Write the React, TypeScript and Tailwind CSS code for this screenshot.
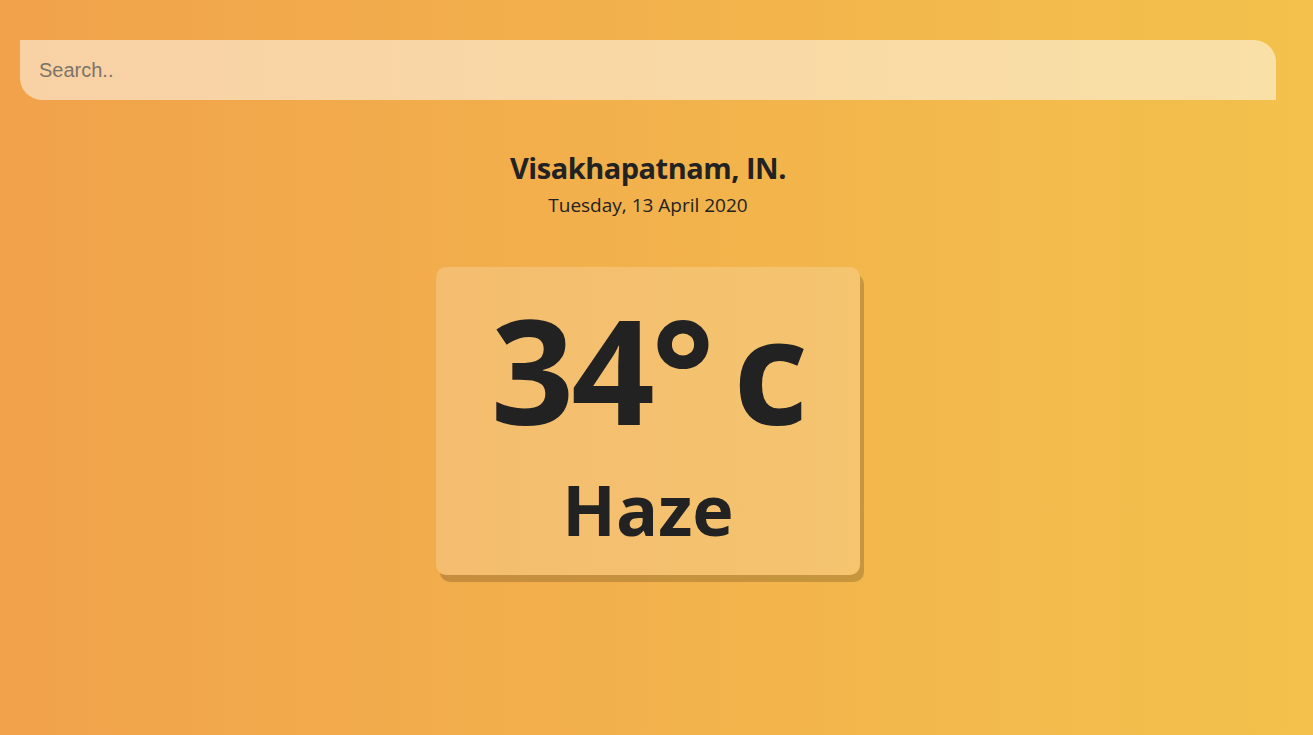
import React from "react";

export default function App() {
  return (
    <div className="min-h-screen w-full bg-linear-to-r from-[#f1a24b] to-[#f3c14c] font-['Open_Sans',sans-serif] text-[#222222]">
      <main className="pt-10 pl-5 pr-[37px]">
        <div className="search-box">
          <input
            type="text"
            placeholder="Search.."
            className="block h-[60px] w-full rounded-tr-[22px] rounded-bl-[22px] bg-white/50 px-[19px] font-['Liberation_Sans',sans-serif] text-[20px] text-[#313131] outline-none placeholder:text-[#7c7469]"
          />
        </div>
        <div className="mt-[50px] flex flex-col items-center">
          <div className="text-[29px] font-bold leading-[36px] tracking-[-0.5px]">Visakhapatnam, IN.</div>
          <div className="mt-[7px] text-[19px] leading-[24px]">Tuesday, 13 April 2020</div>
        </div>
        <div className="mt-[50px] flex justify-center">
          <div className="flex h-[308px] w-[424px] flex-col items-center rounded-[10px] bg-white/20 shadow-[4px_7px_rgba(0,0,0,0.18)]">
            <div className="mt-[22px] flex items-baseline text-[146px] font-bold leading-[160px] tracking-[-3px]">
              <span>34°</span>
              <span className="ml-[22px]">c</span>
            </div>
            <div className="mt-[18px] text-[70px] font-bold leading-[84px]">Haze</div>
          </div>
        </div>
      </main>
    </div>
  );
}
